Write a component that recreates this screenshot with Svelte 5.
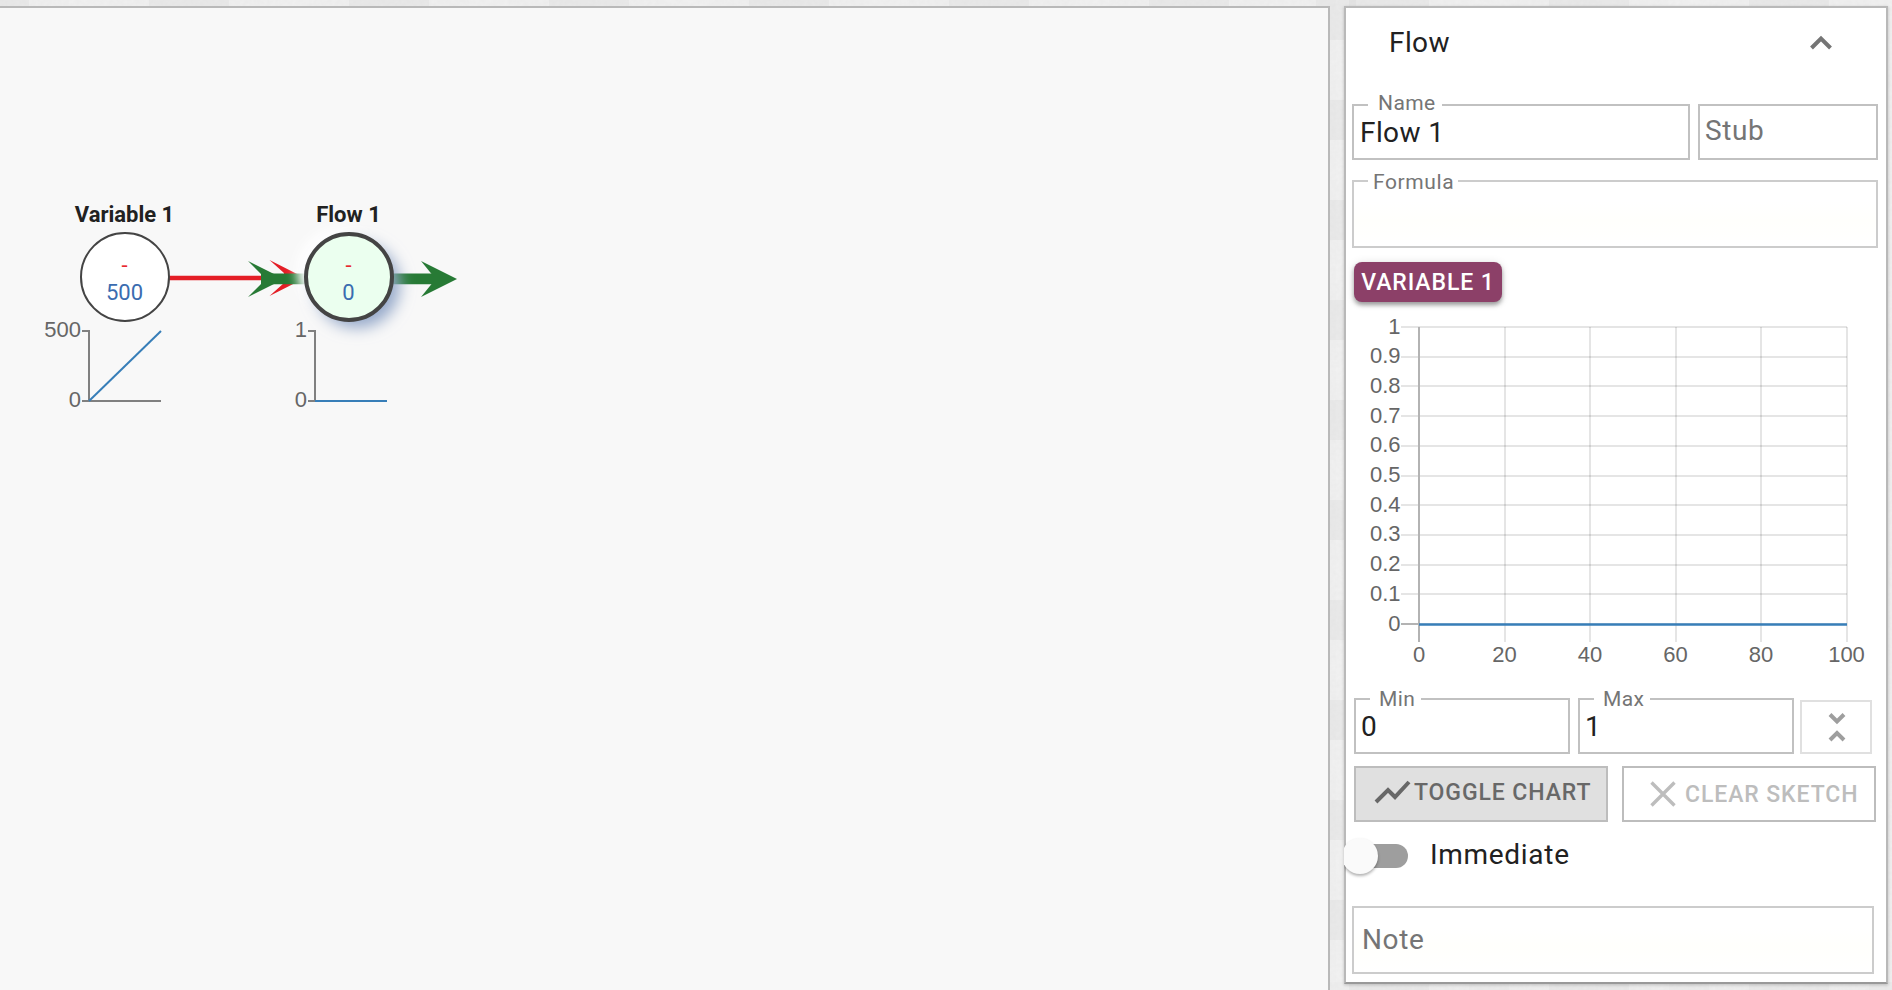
<script>
    let name = $state('Flow 1');
    let stub = $state('');
    let formula = $state('');
    let min = $state('0');
    let max = $state('1');
    let note = $state('');
    let open = $state(true);
    let immediate = $state(false);
    let showChart = $state(true);

    const yTicks = [1, 0.9, 0.8, 0.7, 0.6, 0.5, 0.4, 0.3, 0.2, 0.1, 0];
    const xTicks = [0, 20, 40, 60, 80, 100];
    const left = 67;
    const bottom = 312;

    const nodes = [
        { id: 'v1', label: 'Variable 1', value: '500', x: 125, chartX: 89, top: '500', data: '89,401 161,331' },
        { id: 'f1', label: 'Flow 1', value: '0', x: 349, chartX: 315, top: '1', data: '315,401 387,401', flow: true }
    ];

    // uneven shades for the paper texture behind the panels
    const tiles = [];
    for (let i = 0; i < 50; i++) {
        for (const col of [0, 1]) {
            tiles.push({ x: 1316 + col * 20, y: i * 20, o: ((i * 7 + col * 11 + i * i * 3) % 10) / 10 });
        }
    }
    for (let i = 0; i < 48; i++) {
        tiles.push({ x: i * 40 - 11, y: 0, h: 6, w: 40, o: ((i * 13 + i * i * 3) % 10) / 10 });
        tiles.push({ x: i * 40 - 11, y: 982, h: 8, w: 40, o: ((i * 17 + i * i * 7) % 10) / 10 });
    }
</script>

<div class="page">
    <svg class="page__texture" width="1892" height="990" aria-hidden="true">
        <filter id="grain" x="0" y="0" width="100%" height="100%">
            <feTurbulence type="fractalNoise" baseFrequency="0.25" numOctaves="2" />
            <feColorMatrix values="0 0 0 0 0.5  0 0 0 0 0.5  0 0 0 0 0.5  0.1 0 0 0 0" />
        </filter>
        {#each tiles as t}
            <rect x={t.x} y={t.y} width={t.w ?? 20} height={t.h ?? 20} fill={t.o > 0.5 ? '#fff' : '#ccc'} opacity={Math.abs(t.o - 0.5) * 0.4} />
        {/each}
        <rect width="1892" height="990" filter="url(#grain)" />
    </svg>

    <main class="canvas">
        <svg class="canvas__graph" width="1328" height="982" viewBox="0 8 1328 982">
            <defs>
                <filter id="raised" x="-60%" y="-60%" width="220%" height="220%">
                    <feDropShadow dx="-9" dy="-6" stdDeviation="5.5" flood-color="#fff" flood-opacity="1" />
                </filter>
                <filter id="sunk" x="-60%" y="-60%" width="220%" height="220%">
                    <feDropShadow dx="8" dy="8" stdDeviation="7.5" flood-color="#94a8c9" flood-opacity="1" />
                </filter>
            </defs>

            <path d="M169 278H286" stroke="#e41e26" stroke-width="4.4" />
            <path d="M269.5 260L305 278L269.5 296L284 283V273Z" fill="#e41e26" />

            <path d="M261 278.8H440" stroke="#277a35" stroke-width="10.8" />
            <path d="M248 261L284 279L248 297L261 284V274Z" fill="#277a35" />
            <path d="M421 261L457 279L421 297L434 281V277Z" fill="#277a35" />

            {#each nodes as node (node.id)}
                {#if node.flow}
                    <circle cx={node.x} cy="277" r="43" fill="#fff" filter="url(#raised)" />
                    <circle cx={node.x} cy="277" r="43" fill="#fff" filter="url(#sunk)" />
                {/if}
                <circle class={node.flow ? 'node node--flow' : 'node'} cx={node.x} cy="277" r={node.flow ? 43 : 44} />
                <text class="node__label" x={node.x - 0.5} y="222">{node.label}</text>
                <text class="node__formula" x={node.x - 0.5} y="273">-</text>
                <text class="node__value" x={node.x - 0.5} y="300">{node.value}</text>

                <path class="mini__axis" d="M{node.chartX - 7} 331H{node.chartX}V401M{node.chartX - 7} 401H{node.chartX + 72}" />
                <polyline class="mini__line" points={node.data} />
                <text class="tick tick--y" x={node.chartX - 8} y="337">{node.top}</text>
                <text class="tick tick--y" x={node.chartX - 8} y="407">0</text>
            {/each}
        </svg>
    </main>

    <aside class="panel">
        <header class="panel__header">
            <span>Flow</span>
            <button class="panel__collapse" aria-label="Collapse" onclick={() => (open = !open)}>
                <svg width="24" height="16" viewBox="0 0 24 16"><path d="M2.5 13L12 3.5L21.5 13" /></svg>
            </button>
        </header>

        <div class="row">
            <label class="field field--name">
                <span class="field__label">Name</span>
                <input bind:value={name}>
            </label>
            <label class="field field--stub">
                <input placeholder="Stub" aria-label="Stub" bind:value={stub}>
            </label>
        </div>

        <label class="field field--formula">
            <span class="field__label">Formula</span>
            <input bind:value={formula}>
        </label>

        <button class="chip">Variable 1</button>

        <svg class="chart" width="536" height="366" viewBox="0 0 536 366">
            {#each yTicks as t}
                <path class="chart__grid" d="M49 {Math.round(bottom - t * 297)}H495" />
                <text class="tick tick--y" x="48.5" y={bottom - t * 297 + 6.5}>{t}</text>
            {/each}
            {#each xTicks as t}
                <path class="chart__grid" d="M{Math.round(left + t * 4.275)} 15V330" />
                <text class="tick tick--x" x={left + t * 4.275} y="350">{t}</text>
            {/each}
            <path class="chart__axis" d="M67 15V330M49 312H67" />
            {#if showChart}
                <path class="chart__line" d="M67 312.5H495" />
            {/if}
        </svg>

        <div class="row row--range">
            <label class="field field--range">
                <span class="field__label">Min</span>
                <input bind:value={min}>
            </label>
            <label class="field field--range">
                <span class="field__label">Max</span>
                <input bind:value={max}>
            </label>
            <button class="fit" aria-label="Fit range">
                <svg width="20" height="32" viewBox="0 0 20 32"><path d="M3 3.5L10 10.5L17 3.5M3 29L10 22L17 29" /></svg>
            </button>
        </div>

        <div class="row row--actions">
            <button class="action action--on" onclick={() => (showChart = !showChart)}>
                <svg width="38" height="26" viewBox="0 0 38 26"><path d="M2 22L14 10L21 17L35 2" /></svg>
                <span>Toggle Chart</span>
            </button>
            <button class="action action--disabled" disabled>
                <svg width="26" height="26" viewBox="0 0 26 26"><path d="M1.5 1.5L24.5 24.5M24.5 1.5L1.5 24.5" /></svg>
                <span>Clear Sketch</span>
            </button>
        </div>

        <label class="switch">
            <input type="checkbox" bind:checked={immediate}>
            <span class="switch__track"><span class="switch__knob"></span></span>
            <span class="switch__text">Immediate</span>
        </label>

        <label class="field field--note">
            <input placeholder="Note" aria-label="Note" bind:value={note}>
        </label>
    </aside>
</div>

<style>
    :global(body) {
        background: #f0f0f0;
        font-family: Roboto, sans-serif;
        overflow: hidden;
    }

    .page {
        position: relative;
        display: flex;
        align-items: flex-start;
        gap: 14px;
        box-sizing: border-box;
        width: 1892px;
        height: 990px;
        padding-top: 6px;
        color: #212121;
    }

    .page__texture {
        position: absolute;
        inset: 0;
    }

    .canvas {
        position: relative;
        box-sizing: border-box;
        width: 1330px;
        height: 984px;
        border: solid #b9b9b9;
        border-width: 2px 2px 0 0;
        background: #f8f8f8;
    }

    .canvas__graph {
        display: block;
    }

    .node {
        fill: #fff;
        stroke: #444;
        stroke-width: 2;
    }

    .node--flow {
        fill: #ebffef;
        stroke-width: 4;
    }

    .node__label {
        font-size: 22px;
        font-weight: 700;
        text-anchor: middle;
        fill: #212121;
    }

    .node__formula, .node__value {
        font-size: 22px;
        text-anchor: middle;
        fill: #e8292f;
    }

    .node__value {
        fill: #3a6cb0;
    }

    .mini__axis {
        fill: none;
        stroke: #808080;
        stroke-width: 2;
    }

    .mini__line {
        fill: none;
        stroke: #377eb8;
        stroke-width: 2;
    }

    .tick {
        font-family: "Liberation Sans", Arial, sans-serif;
        font-size: 22px;
        fill: #666;
    }

    .tick--y {
        text-anchor: end;
    }

    .tick--x {
        text-anchor: middle;
    }

    .panel {
        position: relative;
        display: flex;
        flex-direction: column;
        box-sizing: border-box;
        width: 544px;
        height: 978px;
        padding: 0 0 0 6px;
        border: 2px solid #b9b9b9;
        border-bottom-color: #999;
        background: #fff;
        box-shadow: 0 1px 3px rgba(0, 0, 0, 0.2);
    }

    .panel > :global(*) {
        flex: none;
    }

    .panel__header {
        display: flex;
        align-items: center;
        justify-content: space-between;
        box-sizing: border-box;
        height: 68px;
        padding: 1px 53px 0 37px;
        margin-bottom: 28px;
        font-size: 28px;
        letter-spacing: 0.4px;
    }

    button {
        padding: 0;
        font-family: inherit;
        border: 0;
        background: none;
    }

    button path {
        fill: none;
        stroke: #757575;
        stroke-width: 4;
    }

    .panel__collapse {
        display: flex;
    }

    .row {
        display: flex;
        gap: 8px;
    }

    .field {
        position: relative;
        display: flex;
        box-sizing: border-box;
        height: 56px;
        border: 2px solid #c1c1c1;
    }

    .field__label {
        position: absolute;
        top: -16px;
        left: 14px;
        padding: 0 6px 0 10px;
        font-size: 21px;
        line-height: 26px;
        letter-spacing: 0.4px;
        color: #757575;
        background: #fff;
    }

    .field input {
        box-sizing: border-box;
        width: 100%;
        min-width: 0;
        padding: 0 6px;
        border: 0;
        outline: 0;
        font: 28px Roboto, sans-serif;
        letter-spacing: 0.4px;
        color: #212121;
        background: none;
    }

    .field input::placeholder {
        color: #757575;
        opacity: 1;
    }

    .field--name {
        width: 338px;
    }

    .field--stub {
        width: 180px;
    }

    .field--stub input {
        padding: 0 6px 4px 5px;
        letter-spacing: 0.6px;
    }

    .field--formula {
        width: 526px;
        height: 68px;
        margin-top: 20px;
        border-color: #ccc;
        background: linear-gradient(#fff 30%, #fffffc 60%, #fff);
    }

    .field--formula .field__label {
        top: -13px;
        padding: 0 4px 0 5px;
        letter-spacing: 0.6px;
    }

    .field--range {
        width: 216px;
    }

    .field--range .field__label {
        top: -14px;
        padding-left: 9px;
    }

    .field--range input {
        padding-left: 5px;
    }

    .chip {
        align-self: flex-start;
        width: 148px;
        height: 40px;
        margin: 14px 0 0 2px;
        border-radius: 8px;
        font-size: 23px;
        font-weight: 500;
        letter-spacing: 0.9px;
        text-transform: uppercase;
        color: #fff;
        background: #8c4068;
        box-shadow: 0 3px 4px rgba(0, 0, 0, 0.35), 0 1px 10px rgba(0, 0, 0, 0.12);
    }

    .chart {
        display: block;
        margin-top: 10px;
    }

    .chart__grid {
        stroke: rgba(0, 0, 0, 0.1);
        stroke-width: 2;
    }

    .chart__axis {
        fill: none;
        stroke: #b3b3b3;
        stroke-width: 2;
    }

    .chart__line {
        stroke: #377eb8;
        stroke-width: 2.6;
    }

    .row--range {
        align-items: flex-end;
        margin: 20px 0 0 2px;
    }

    .fit {
        display: flex;
        align-items: center;
        justify-content: center;
        box-sizing: border-box;
        width: 72px;
        height: 54px;
        padding-left: 1px;
        margin-left: -2px;
        border: 2px solid #e0e0e0;
    }

    .fit path {
        stroke: #9e9e9e;
    }

    .row--actions {
        gap: 14px;
        margin: 12px 0 0 2px;
    }

    .action {
        display: flex;
        align-items: center;
        box-sizing: border-box;
        width: 254px;
        height: 56px;
        padding-left: 18px;
        border: 2px solid #bdbdbd;
        font-size: 23px;
        font-weight: 500;
        letter-spacing: 0.9px;
        text-transform: uppercase;
        white-space: nowrap;
        color: #686868;
    }

    .action path {
        stroke: #686868;
    }

    .action--on {
        padding-bottom: 3px;
        background: #e0e0e0;
    }

    .action--on span {
        margin-left: 2px;
    }

    .action--disabled {
        padding-left: 26px;
        color: #bdbdbd;
    }

    .action--disabled span {
        margin-left: 9px;
    }

    .action--disabled path {
        stroke: #bdbdbd;
        stroke-width: 3.4;
    }

    /* the knob overhangs the panel, cut it at the panel's outer edge */
    .switch {
        display: flex;
        align-items: center;
        height: 36px;
        margin: 16px 0 32px;
        font-size: 28px;
        letter-spacing: 0.7px;
        clip-path: inset(-10px 0 -10px -8px);
    }

    .switch input {
        display: none;
    }

    .switch__track {
        position: relative;
        width: 56px;
        height: 24px;
        margin-right: 22px;
        border-radius: 12px;
        background: #9e9e9e;
    }

    .switch__knob {
        position: absolute;
        top: -6px;
        left: -10px;
        width: 36px;
        height: 36px;
        border-radius: 50%;
        background: #fafafa;
        box-shadow: 0 2px 3px rgba(0, 0, 0, 0.3);
    }

    .switch__text {
        padding-bottom: 4px;
    }

    .field--note {
        width: 522px;
        height: 68px;
        border-color: #ccc;
        background: linear-gradient(#fff 30%, #fffffc 60%, #fff);
    }

    .field--note input {
        padding: 0 8px 2px;
        letter-spacing: 0.6px;
    }
</style>
